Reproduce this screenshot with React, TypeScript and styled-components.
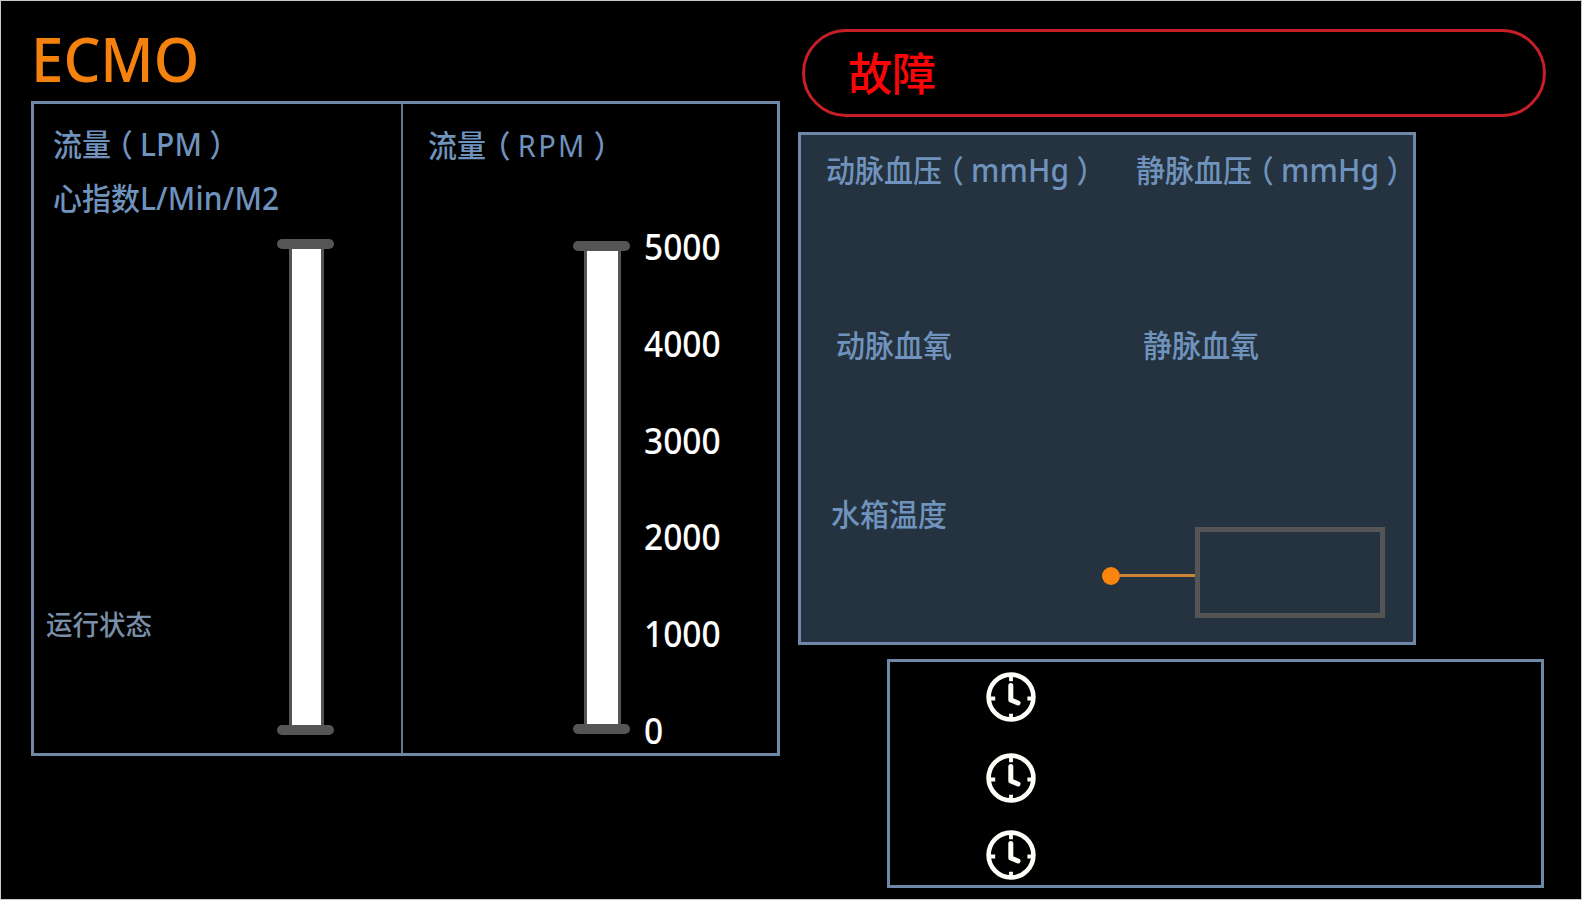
import React from "react";
import styled, { createGlobalStyle } from "styled-components";

const color = {
  frame: "#c3cac8",
  line: "#7088a8",
  label: "#6f93bd",
  muted: "#7a8fa8",
  orange: "#f5820f",
  steel: "#555555",
  panel: "#25323f",
  alarm: "#c61f27",
};

const GlobalStyle = createGlobalStyle`
  * { box-sizing: border-box; }
  body {
    margin: 0;
    background: #000;
    font-family: "Noto Sans", "Noto Sans CJK SC", sans-serif;
  }
`;

const Screen = styled.main`
  display: flex;
  width: 1582px;
  height: 900px;
  overflow: hidden;
  background: #000;
  border: 1px solid ${color.frame};
`;

const LeftColumn = styled.section`
  width: 749px;
  margin-left: 30px;
`;

const RightColumn = styled.section`
  width: 760px;
  margin-left: 18px;
  padding-top: 28px;
`;

const Title = styled.h1`
  width: max-content;
  height: 100px;
  margin: 0;
  color: ${color.orange};
  font-size: 62px;
  font-weight: 550;
  line-height: 115px;
  transform: scaleX(0.938);
  transform-origin: 0 0;
`;

const FlowPanel = styled.div`
  display: flex;
  height: 655px;
  border: 3px solid ${color.line};
`;

const FlowHalf = styled.div<{ $wide?: boolean }>`
  display: flex;
  flex: ${(p) => (p.$wide ? "1" : "0 0 369px")};
  border-right: ${(p) => (p.$wide ? "none" : `2px solid #62778f`)};
`;

const FlowInfo = styled.div<{ $width: number; $top: number; $left: number }>`
  display: flex;
  flex-direction: column;
  width: ${(p) => p.$width}px;
  padding: ${(p) => p.$top}px 0 0 ${(p) => p.$left}px;
`;

const Label = styled.div<{ $size?: number; $stretch?: number; $muted?: boolean }>`
  width: max-content;
  height: 40px;
  color: ${(p) => (p.$muted ? color.muted : color.label)};
  font-size: ${(p) => p.$size ?? 31}px;
  font-weight: 500;
  line-height: 40px;
  white-space: pre;
  transform: scaleX(${(p) => p.$stretch ?? 0.935});
  transform-origin: 0 0;
`;

const IndexLabel = styled(Label)`
  margin-top: 15px;
`;

const StateLabel = styled(Label)`
  margin: 387px 0 0 -7px;
`;

const Latin = styled.span<{ $light?: boolean }>`
  font-size: ${(p) => (p.$light ? 31 : 32)}px;
  font-weight: ${(p) => (p.$light ? 400 : 500)};
  letter-spacing: ${(p) => (p.$light ? 2.5 : 0.2)}px;
`;

/* Full-width bracket, centred in its em square */
const Bracket = styled.span<{ $offset?: number }>`
  margin-left: ${(p) => p.$offset ?? 0}px;
  padding: 0 0.25em;
  font-family: "Noto Sans CJK SC", sans-serif;
  font-feature-settings: "halt";
  font-weight: 500;
`;

const Gauge = styled.div<{ $top: number; $height: number }>`
  display: flex;
  flex-direction: column;
  align-items: center;
  width: 57px;
  height: ${(p) => p.$height}px;
  margin-top: ${(p) => p.$top}px;
`;

const GaugeCap = styled.div`
  flex: 0 0 10px;
  width: 57px;
  border-radius: 5px;
  background: ${color.steel};
`;

const GaugeTube = styled.div<{ $width: number }>`
  flex: 1;
  width: ${(p) => p.$width}px;
  margin-left: 2px;
  background: #fff;
  border: solid ${color.steel};
  border-width: 0 3px;
`;

const Scale = styled.div`
  display: flex;
  flex-direction: column;
  justify-content: space-between;
  height: 524px;
  margin: 122px 0 0 14px;
`;

const Tick = styled.div`
  height: 40px;
  color: #fff;
  font-size: 37px;
  font-weight: 500;
  line-height: 40px;
  transform: scaleX(0.905);
  transform-origin: 0 0;
`;

const AlarmBar = styled.div`
  display: flex;
  align-items: center;
  width: 744px;
  height: 88px;
  margin-left: 4px;
  padding: 2px 0 0 43px;
  border: 3px solid ${color.alarm};
  border-radius: 44px;
`;

const AlarmText = styled.span`
  color: #fb0508;
  font-size: 45px;
  font-weight: 500;
  line-height: 60px;
  transform: scaleX(0.98);
  transform-origin: 0 0;
`;

const VitalsPanel = styled.div`
  width: 618px;
  height: 513px;
  margin-top: 15px;
  padding: 14px 0 0 25px;
  background: ${color.panel};
  border: 3px solid ${color.line};
`;

const VitalsRow = styled.div<{ $height: number; $indent: number; $first: number }>`
  display: grid;
  grid-template-columns: ${(p) => p.$first}px 1fr;
  height: ${(p) => p.$height}px;
  padding-left: ${(p) => p.$indent}px;
`;

const TempReadout = styled.div`
  display: flex;
  align-items: center;
  margin: 33px 0 0 276px;
`;

const Dot = styled.div`
  width: 18px;
  height: 18px;
  border-radius: 50%;
  background: #fb840f;
  margin-top: 6px;
`;

const Lead = styled.div`
  width: 75px;
  height: 3px;
  margin-top: 6px;
  background: #cd8432;
`;

const TempBox = styled.div`
  width: 190px;
  height: 91px;
  border: 5px solid ${color.steel};
`;

const TimerPanel = styled.div`
  width: 657px;
  height: 229px;
  margin: 14px 0 0 89px;
  padding: 10px 0 0 96px;
  border: 3px solid ${color.line};
`;

const TimerRow = styled.div<{ $height: number }>`
  height: ${(p) => p.$height}px;
`;

function Clock() {
  return (
    <svg width="50" height="50" viewBox="0 0 50 50" fill="none" stroke="#fffffa" display="block">
      <circle cx="25" cy="25" r="22.4" strokeWidth="4.6" />
      <path d="M25 4v5.2M25 46v-4.2M4 26.5h5.2M46 26.5h-4.6" strokeWidth="3.8" />
      <path d="M24.8 13.5V28l7.2 3" strokeWidth="5" strokeLinecap="round" strokeLinejoin="round" />
    </svg>
  );
}

function Tube({ top, height, width }: { top: number; height: number; width: number }) {
  return (
    <Gauge $top={top} $height={height}>
      <GaugeCap />
      <GaugeTube $width={width} />
      <GaugeCap />
    </Gauge>
  );
}

function Unit({ children, light, offset }: { children: string; light?: boolean; offset?: number }) {
  return (
    <>
      <Bracket $offset={offset}>（</Bracket>
      <Latin $light={light}>{children}</Latin>
      <Bracket>）</Bracket>
    </>
  );
}

export default function App() {
  return (
    <Screen>
      <GlobalStyle />
      <LeftColumn>
        <Title>ECMO</Title>
        <FlowPanel>
          <FlowHalf>
            <FlowInfo $width={243} $top={19} $left={19}>
              <Label>流量<Unit>LPM</Unit></Label>
              <IndexLabel>心指数<Latin>L/Min/M2</Latin></IndexLabel>
              <StateLabel $muted $size={27} $stretch={0.98}>运行状态</StateLabel>
            </FlowInfo>
            <Tube top={135} height={496} width={35} />
          </FlowHalf>
          <FlowHalf $wide>
            <FlowInfo $width={170} $top={20} $left={25}>
              <Label>流量<Unit light offset={3}>RPM</Unit></Label>
            </FlowInfo>
            <Tube top={137} height={493} width={37} />
            <Scale>
              {[5000, 4000, 3000, 2000, 1000, 0].map((v) => (
                <Tick key={v}>{v}</Tick>
              ))}
            </Scale>
          </FlowHalf>
        </FlowPanel>
      </LeftColumn>
      <RightColumn>
        <AlarmBar>
          <AlarmText>故障</AlarmText>
        </AlarmBar>
        <VitalsPanel>
          <VitalsRow $height={176} $indent={0} $first={310}>
            <Label>动脉血压<Unit>mmHg</Unit></Label>
            <Label>静脉血压<Unit>mmHg</Unit></Label>
          </VitalsRow>
          <VitalsRow $height={169} $indent={10} $first={307}>
            <Label>动脉血氧</Label>
            <Label>静脉血氧</Label>
          </VitalsRow>
          <VitalsRow $height={0} $indent={5} $first={300}>
            <Label>水箱温度</Label>
          </VitalsRow>
          <TempReadout>
            <Dot />
            <Lead />
            <TempBox />
          </TempReadout>
        </VitalsPanel>
        <TimerPanel>
          <TimerRow $height={81}><Clock /></TimerRow>
          <TimerRow $height={77}><Clock /></TimerRow>
          <TimerRow $height={50}><Clock /></TimerRow>
        </TimerPanel>
      </RightColumn>
    </Screen>
  );
}
